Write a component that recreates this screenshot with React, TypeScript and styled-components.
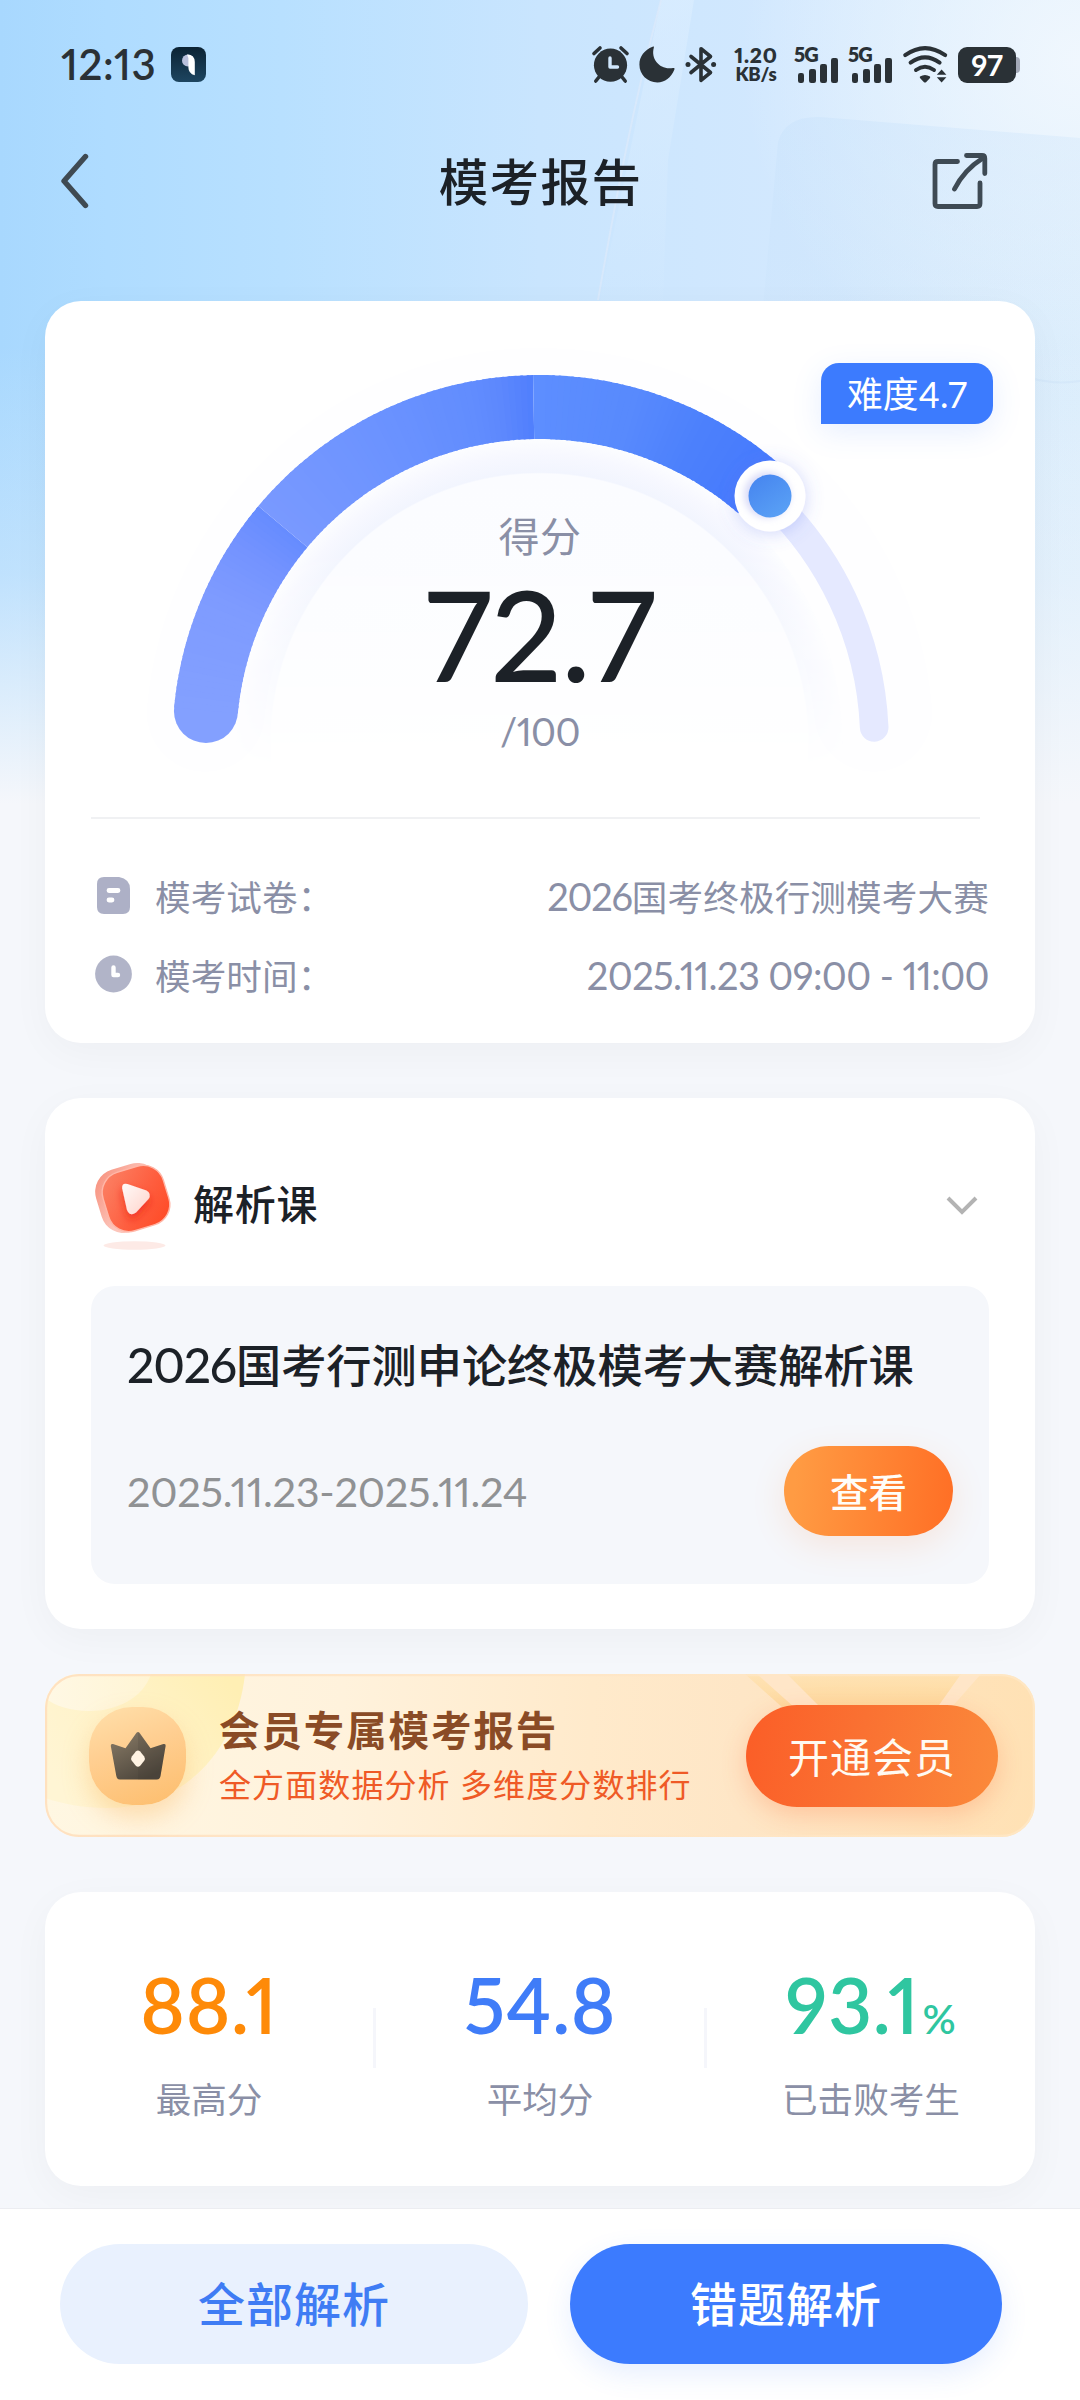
import React from "react";
import styled, { createGlobalStyle } from "styled-components";

const GlobalStyle = createGlobalStyle`
  * { box-sizing: border-box; }
  html, body { margin: 0; padding: 0; background: #f5f7fb; }
  body { font-family: Lato, "Noto Sans CJK SC", sans-serif; }
`;

const ink = "#1c2127";
const statusInk = "#2a3136";
const muted = "#8a8fa6";
const blue = "#3c7bfe";

const Page = styled.div`
  position: relative;
  isolation: isolate;
  display: flex;
  flex-direction: column;
  width: 1080px;
  height: 2400px;
  overflow: hidden;
  background: #f5f7fb;
  color: ${ink};
  white-space: nowrap;
  font-variant-numeric: proportional-nums lining-nums;
`;

const BackdropArt = styled.svg`
  position: absolute;
  inset: 0 0 auto 0;
  z-index: -1;
`;

const Digits = styled.span`
  font-size: 1.065em;
  line-height: 1;
  letter-spacing: -1.2px;
`;

/* ---------- status bar ---------- */

const StatusBar = styled.div`
  display: flex;
  align-items: center;
  justify-content: space-between;
  height: 129px;
  padding: 0 60px 0 61px;
  color: ${statusInk};
`;

const StatusLeft = styled.div`
  display: flex;
  align-items: center;
  gap: 15px;
`;

const Clock = styled.span`
  font-size: 42px;
  line-height: 48px;
  padding-bottom: 2px;
  font-weight: 600;
  letter-spacing: 0.5px;
`;

const StatusRight = styled.div`
  display: flex;
  align-items: center;
`;

const StatusGlyph = styled.svg<{ $gap: number }>`
  display: block;
  flex: none;
  margin-left: ${(p) => p.$gap}px;
  overflow: visible;
`;

const NetSpeed = styled.div`
  display: flex;
  flex-direction: column;
  align-items: center;
  width: 46px;
  margin-left: 16px;
  padding-bottom: 1px;
`;

const NetValue = styled.span`
  font-size: 21px;
  line-height: 21px;
  font-weight: 800;
  letter-spacing: 0.8px;
`;

const NetUnit = styled.span`
  font-size: 18.5px;
  line-height: 19px;
  font-weight: 800;
  letter-spacing: -0.2px;
`;

const SignalIcon = styled.div<{ $gap: number }>`
  position: relative;
  display: flex;
  align-items: flex-end;
  justify-content: flex-end;
  gap: 4.4px;
  width: 43px;
  height: 37px;
  margin-left: ${(p) => p.$gap}px;
`;

const SignalTag = styled.span`
  position: absolute;
  top: -3px;
  left: -1px;
  font-size: 20px;
  line-height: 22px;
  font-weight: 800;
  letter-spacing: -0.8px;
`;

const SignalBar = styled.i<{ $h: number }>`
  width: 6.8px;
  height: ${(p) => p.$h}px;
  border-radius: 2.2px;
  background: ${statusInk};
`;

const Battery = styled.div`
  display: flex;
  align-items: center;
  margin-left: 10px;
`;

const BatteryBody = styled.div`
  width: 58px;
  height: 36px;
  border-radius: 9px;
  background: ${statusInk};
  color: #fff;
  text-align: center;
  font-size: 29px;
  line-height: 35px;
  font-weight: 700;
`;

const BatteryCap = styled.div`
  width: 4px;
  height: 16px;
  border-radius: 0 4px 4px 0;
  background: #a3a9b8;
`;

/* ---------- navigation ---------- */

const NavBar = styled.header`
  display: grid;
  grid-template-columns: 1fr auto 1fr;
  align-items: center;
  height: 104px;
  padding: 0 92px 0 60px;
`;

const NavTitle = styled.h1`
  margin: 0;
  padding: 1px 0 0 33px;
  font-size: 49.5px;
  font-weight: 500;
  line-height: 60px;
  letter-spacing: 1.4px;
`;

const NavAction = styled.button<{ $end?: boolean }>`
  display: flex;
  justify-self: ${(p) => (p.$end ? "end" : "start")};
  padding: 0;
  border: 0;
  background: none;
`;

/* ---------- cards ---------- */

const Content = styled.main`
  display: flex;
  flex-direction: column;
  padding: 68px 45px 0;
`;

const Card = styled.section<{ $h: number; $top?: number }>`
  position: relative;
  height: ${(p) => p.$h}px;
  margin-top: ${(p) => p.$top ?? 0}px;
  border-radius: 36px;
  background: #fff;
  box-shadow: 0 10px 40px rgba(20, 24, 40, 0.035);
`;

const GaugeArea = styled.div`
  display: grid;
  height: 516px;
  > * { grid-area: 1 / 1; }
`;

const GaugeDrawing = styled.svg`
  display: block;
`;

const ScoreStack = styled.div`
  display: flex;
  flex-direction: column;
  align-items: center;
  padding-top: 206px;
`;

const ScoreLabel = styled.span`
  font-size: 41px;
  line-height: 60px;
  letter-spacing: 0.6px;
  color: ${muted};
`;

const ScoreValue = styled.span`
  margin-top: -3px;
  font-size: 125px;
  line-height: 140px;
  font-weight: 500;
  letter-spacing: -0.6px;
`;

const ScoreTotal = styled.span`
  margin-top: 2px;
  font-size: 38px;
  line-height: 50px;
  letter-spacing: -0.6px;
  color: ${muted};
`;

const DifficultyTag = styled.div`
  position: absolute;
  top: 62px;
  right: 42px;
  width: 172px;
  height: 61px;
  border-radius: 18px 18px 18px 0;
  background: ${blue};
  box-shadow: 0 8px 30px rgba(60, 123, 254, 0.13);
  color: #fff;
  font-size: 35.8px;
  line-height: 64px;
  text-align: center;
`;

const Divider = styled.hr`
  height: 2px;
  margin: 0 55px 37px 46px;
  border: 0;
  background: #f0f1f3;
`;

const InfoRow = styled.div`
  display: flex;
  align-items: center;
  height: 79px;
  padding: 0 46px 0 50px;
  color: ${muted};
  font-size: 35.6px;
`;

const InfoLabel = styled.span`
  margin-left: 20px;
  letter-spacing: 0.1px;
`;

const InfoValue = styled.span<{ $size?: number; $track?: number }>`
  margin-left: auto;
  font-size: ${(p) => p.$size ?? 35.6}px;
  letter-spacing: ${(p) => p.$track ?? 0}px;
`;

/* ---------- lesson card ---------- */

const LessonHeader = styled.div`
  display: flex;
  align-items: center;
  height: 188px;
  padding: 26px 56px 0 46px;
`;

const LessonHeading = styled.h2`
  flex: 1;
  margin: 0 0 0 20px;
  font-size: 41px;
  line-height: 60px;
  font-weight: 500;
  letter-spacing: 0.8px;
`;

const FoldIcon = styled.svg`
  margin-top: 2px;
`;

const LessonPanel = styled.div`
  display: flex;
  flex-direction: column;
  gap: 50px;
  height: 298px;
  margin: 0 46px;
  padding: 50px 36px 0 36px;
  border-radius: 24px;
  background: #f5f7fb;
`;

const LessonTitle = styled.h3`
  height: 60px;
  margin: 0;
  font-size: 45.2px;
  line-height: 60px;
  font-weight: 500;
`;

const LessonFoot = styled.div`
  display: flex;
  align-items: center;
  justify-content: space-between;
`;

const LessonDate = styled.span`
  font-size: 41.5px;
  color: #909294;
  letter-spacing: -0.25px;
`;

const ViewButton = styled.button`
  width: 169px;
  height: 90px;
  padding: 0 0 2px;
  border: 0;
  border-radius: 45px;
  background: linear-gradient(95deg, #ff9b43 8%, #ff7026 97%);
  box-shadow: 0 10px 34px rgba(255, 130, 50, 0.14);
  color: #fffdf8;
  font: inherit;
  font-size: 38.5px;
  font-weight: 500;
`;

/* ---------- membership banner ---------- */

const Banner = styled.section`
  position: relative;
  display: flex;
  align-items: center;
  height: 163px;
  margin-top: 45px;
  padding: 0 37px 0 44px;
  border-radius: 34px;
  overflow: hidden;
  background: linear-gradient(92deg, #fff7e2 0%, #fff2dc 30%, #ffeacb 55%, #fee6c6 70%, #ffe1b4 100%);
`;

const BannerArt = styled.svg`
  position: absolute;
  inset: 0;
`;

const CrownTile = styled.div`
  position: relative;
  display: grid;
  place-items: center;
  width: 97px;
  height: 98px;
  border-radius: 43px;
  background: linear-gradient(160deg, #ffe0ab 0%, #ffcf92 40%, #fdbd6c 100%);
  box-shadow: 0 12px 26px rgba(250, 180, 90, 0.38);
`;

const BannerCopy = styled.div`
  position: relative;
  display: flex;
  flex-direction: column;
  flex: 1;
  margin-left: 33px;
`;

const BannerTitle = styled.strong`
  font-size: 40.5px;
  line-height: 58px;
  font-weight: 700;
  letter-spacing: 1.9px;
  color: #8a4b26;
`;

const BannerSub = styled.span`
  font-size: 32px;
  line-height: 50px;
  letter-spacing: 1.1px;
  color: #ef5a26;
`;

const JoinButton = styled.button`
  position: relative;
  width: 252px;
  height: 102px;
  padding: 0 0 1px;
  border: 0;
  border-radius: 51px;
  background: linear-gradient(100deg, #fb5f28 4%, #fa7132 45%, #fb883a 96%);
  box-shadow: 0 8px 24px rgba(255, 110, 60, 0.27);
  color: #fffaf2;
  font: inherit;
  font-size: 41px;
  letter-spacing: 1px;
`;

/* ---------- statistics ---------- */

const StatsRow = styled.div`
  display: grid;
  grid-template-columns: 1fr 3px 1fr 3px 1fr;
  height: 100%;
`;

const Stat = styled.div`
  display: flex;
  flex-direction: column;
  align-items: center;
  gap: 35px;
  padding-top: 73px;
`;

const StatValue = styled.div<{ $color: string }>`
  height: 80px;
  font-size: 76px;
  line-height: 80px;
  font-weight: 600;
  letter-spacing: 0.7px;
  color: ${(p) => p.$color};
`;

const StatUnit = styled.span`
  margin-left: 3px;
  font-size: 41px;
  line-height: 40px;
`;

const StatLabel = styled.span`
  font-size: 35.6px;
  line-height: 40px;
  color: ${muted};
`;

const StatDivider = styled.div`
  height: 60px;
  margin-top: 116px;
  background: #f5f6fb;
`;

/* ---------- bottom bar ---------- */

const BottomBar = styled.footer`
  position: relative;
  display: flex;
  gap: 42px;
  height: 192px;
  margin-top: auto;
  padding: 35px 78px 0 60px;
  border-top: 1px solid #ecedf1;
  background: #fff;
`;

const PillButton = styled.button<{ $primary?: boolean }>`
  flex: none;
  width: ${(p) => (p.$primary ? 432 : 468)}px;
  height: 120px;
  padding: 0 0 5px;
  border: 0;
  border-radius: 60px;
  background: ${(p) => (p.$primary ? blue : "#e9f1fe")};
  box-shadow: ${(p) => (p.$primary ? "0 10px 28px rgba(60, 123, 254, 0.12)" : "none")};
  color: ${(p) => (p.$primary ? "#fff" : "#3f7cf4")};
  font: inherit;
  font-size: 47px;
  font-weight: 500;
  letter-spacing: 1px;
`;

/* ---------- drawings ---------- */

function Backdrop() {
  return (
    <BackdropArt width="1080" height="820" viewBox="0 0 1080 820">
      <defs>
        <linearGradient id="sky" x1="0" x2="1" y1="0" y2="0">
          <stop offset="0" stopColor="#a8d8fe" />
          <stop offset="0.1" stopColor="#afdcff" />
          <stop offset="0.26" stopColor="#b8e0ff" />
          <stop offset="0.5" stopColor="#c9e5fe" />
          <stop offset="0.72" stopColor="#d2e8fe" />
          <stop offset="1" stopColor="#dceefc" />
        </linearGradient>
        <linearGradient id="skyFade" x1="0" x2="0" y1="0" y2="1">
          <stop offset="0.42" stopColor="#f5f7fb" stopOpacity="0" />
          <stop offset="0.7" stopColor="#f5f7fb" stopOpacity="0.3" />
          <stop offset="0.98" stopColor="#f5f7fb" stopOpacity="1" />
        </linearGradient>
        <radialGradient id="cornerGlow" gradientUnits="userSpaceOnUse" cx="1080" cy="60" r="340">
          <stop offset="0" stopColor="#f2f8fe" stopOpacity="0.9" />
          <stop offset="1" stopColor="#f2f8fe" stopOpacity="0" />
        </radialGradient>
        <linearGradient id="beam" x1="0" x2="0" y1="0" y2="1">
          <stop offset="0" stopColor="#dceeff" stopOpacity="0.65" />
          <stop offset="1" stopColor="#dceeff" stopOpacity="0" />
        </linearGradient>
        <linearGradient id="sheet" x1="0" x2="0.3" y1="0" y2="1">
          <stop offset="0" stopColor="#c6e1fb" stopOpacity="0.42" />
          <stop offset="1" stopColor="#cfe5fa" stopOpacity="0.05" />
        </linearGradient>
      </defs>
      <rect width="1080" height="820" fill="url(#sky)" />
      <path d="M661 0H694L668 160L662 330H594Q628 160 661 0Z" fill="url(#beam)" />
      <path d="M661 0Q640 80 626 150T598 300" fill="none" stroke="#e3ecfa" strokeOpacity="0.5" strokeWidth="2" />
      <rect width="1080" height="420" fill="url(#cornerGlow)" />
      <path d="M820 117L1080 138V560H740L778 142Q785 116 820 117Z" fill="url(#sheet)" />
      <path d="M1030 378Q1056 385 1080 381" fill="none" stroke="#c3dcf4" strokeOpacity="0.3" strokeWidth="2" />
      <rect width="1080" height="820" fill="url(#skyFade)" />
    </BackdropArt>
  );
}

const GAUGE = { cx: 539.5, cy: 742, r: 335 };

const polar = (deg: number, r = GAUGE.r): [number, number] => {
  const a = (deg * Math.PI) / 180;
  return [GAUGE.cx + r * Math.cos(a), GAUGE.cy - r * Math.sin(a)];
};

const arc = (from: number, to: number, r = GAUGE.r) => {
  const [x1, y1] = polar(from, r);
  const [x2, y2] = polar(to, r);
  return `M${x1} ${y1}A${r} ${r} 0 0 1 ${x2} ${y2}`;
};

type Stop = [number, number[]];

const bands: Stop[][] = [
  [[174.6, [131, 160, 255]], [156, [126, 155, 255]], [147, [116, 147, 255]], [140, [102, 140, 255]]],
  [[140, [121, 153, 255]], [118, [108, 147, 255]], [102, [98, 141, 254]], [96, [92, 135, 253]], [91, [80, 127, 253]]],
  [[91, [93, 142, 255]], [75, [88, 138, 253]], [62, [76, 128, 252]], [49, [69, 121, 253]]],
];

const shade = (stops: Stop[], deg: number) => {
  let i = 0;
  while (i < stops.length - 2 && deg < stops[i + 1][0]) i++;
  const [a, ca] = stops[i];
  const [b, cb] = stops[i + 1];
  const t = Math.min(1, Math.max(0, (a - deg) / (a - b)));
  return `rgb(${ca.map((v, k) => Math.round(v + (cb[k] - v) * t)).join(",")})`;
};

function Gauge() {
  const slices: React.ReactElement[] = [];
  bands.forEach((stops, n) => {
    const end = stops[stops.length - 1][0];
    for (let d = stops[0][0]; d > end + 0.01; d -= 1) {
      const next = Math.max(end, d - 1.4);
      slices.push(<path key={`${n}-${d}`} d={arc(d, next)} stroke={shade(stops, d - 0.5)} strokeWidth="64" fill="none" />);
    }
  });
  const [sx, sy] = polar(174.7);
  const [kx, ky] = [770, 496];
  return (
    <GaugeDrawing width="990" height="516" viewBox="45 301 990 516">
      <defs>
        <radialGradient id="dial" gradientUnits="userSpaceOnUse" cx="539.5" cy="742" r="303">
          <stop offset="0" stopColor="#fcfdff" />
          <stop offset="0.885" stopColor="#fbfcff" />
          <stop offset="0.89" stopColor="#f2f5fe" />
          <stop offset="0.95" stopColor="#f7f8ff" />
          <stop offset="1" stopColor="#fcfdff" />
        </radialGradient>
        <linearGradient id="dialFade" gradientUnits="userSpaceOnUse" x1="0" x2="0" y1="430" y2="770">
          <stop offset="0" stopColor="#fff" />
          <stop offset="0.35" stopColor="#fff" />
          <stop offset="1" stopColor="#000" />
        </linearGradient>
        <mask id="dialMask" maskUnits="userSpaceOnUse" x="45" y="301" width="990" height="516">
          <rect x="45" y="301" width="990" height="516" fill="url(#dialFade)" />
        </mask>
        <linearGradient id="knob" x1="0" x2="0.7" y1="0" y2="1">
          <stop offset="0" stopColor="#4583ef" />
          <stop offset="1" stopColor="#59a0f5" />
        </linearGradient>
        <filter id="knobShadow" x="-60%" y="-60%" width="220%" height="220%">
          <feDropShadow dx="0" dy="2" stdDeviation="9" floodColor="#5f78f0" floodOpacity="0.3" />
        </filter>
        <filter id="knobInner" x="-50%" y="-50%" width="200%" height="200%">
          <feGaussianBlur stdDeviation="3.5" />
        </filter>
      </defs>
      <path d={arc(175, 5)} fill="none" stroke="#fefeff" strokeWidth="118" strokeLinecap="round" />
      <g mask="url(#dialMask)">
        <circle cx="539.5" cy="742" r="303" fill="url(#dial)" />
      </g>
      <path d={arc(48, 2.5)} fill="none" stroke="#e5e9ff" strokeWidth="28.6" strokeLinecap="round" />
      <circle cx={sx} cy={sy} r="32" fill="rgb(131,160,255)" />
      {slices}
      <circle cx={kx} cy={ky} r="35.5" fill="#fff" filter="url(#knobShadow)" />
      <circle cx={kx - 3} cy={ky - 1} r="23" fill="#b9bdf2" fillOpacity="0.55" filter="url(#knobInner)" />
      <circle cx={kx} cy={ky} r="21.5" fill="url(#knob)" />
    </GaugeDrawing>
  );
}

function AppBadge() {
  return (
    <svg width="35" height="35" viewBox="0 0 35 35">
      <defs>
        <linearGradient id="appBg" x1="0" x2="0" y1="0" y2="1">
          <stop offset="0" stopColor="#0c2334" />
          <stop offset="1" stopColor="#1d4560" />
        </linearGradient>
      </defs>
      <rect width="35" height="35" rx="8" fill="url(#appBg)" />
      <circle cx="17" cy="13.5" r="6" fill="#b9c0dc" />
      <path d="M16 7.6Q23.8 8 23.8 15V28.3Q17.4 26.5 17.4 20.5V11Z" fill="#fff" />
    </svg>
  );
}

function StatusIcons() {
  return (
    <>
      <StatusGlyph $gap={0} width="37" height="37" viewBox="0 0 37 37">
        <circle cx="18.5" cy="19.2" r="16.6" fill={statusInk} />
        <path d="M2 7.5L8 2M35 7.5L29 2M7 31L3.8 35M30 31L33.2 35" stroke={statusInk} strokeWidth="3.6" strokeLinecap="round" />
        <path d="M18 12V21H25.5" fill="none" stroke="#d0e7fd" strokeWidth="3.4" strokeLinecap="round" strokeLinejoin="round" />
      </StatusGlyph>
      <StatusGlyph $gap={10} width="36" height="37" viewBox="0 0 36 37">
        <path d="M13.6 0.8C14.6 0.2 15.2 0.6 14.8 1.8C11.5 13.5 21.5 24.5 34 22C35.4 21.8 35.8 22.4 35.4 23.4C32 31.5 26 36.4 18.4 36.4C8.2 36.4 0.4 28.6 0.4 18.6C0.4 10.6 5.5 4 13.6 0.8Z" fill={statusInk} />
      </StatusGlyph>
      <StatusGlyph $gap={10} width="32" height="37" viewBox="0 0 32 37">
        <path d="M6 10.5L25.5 26.5L16 34.3V2.7L25.5 10.5L6 26.5" fill="none" stroke={statusInk} strokeWidth="3.6" strokeLinecap="round" strokeLinejoin="round" />
        <circle cx="3" cy="18.5" r="2.5" fill={statusInk} />
        <circle cx="28.6" cy="18.5" r="2.5" fill={statusInk} />
      </StatusGlyph>
    </>
  );
}

function Signal({ gap }: { gap: number }) {
  return (
    <SignalIcon $gap={gap}>
      <SignalTag>5G</SignalTag>
      {[10, 14.5, 19, 25].map((h) => (
        <SignalBar key={h} $h={h} />
      ))}
    </SignalIcon>
  );
}

function Wifi() {
  return (
    <StatusGlyph $gap={11} width="45" height="37" viewBox="0 0 45 37">
      <g fill="none" stroke={statusInk} strokeWidth="4" strokeLinecap="round">
        <path d="M2.2 9.2Q22 -5 42.2 9.2" />
        <path d="M7.6 16.6Q22 6.2 36.6 16.6" />
        <path d="M13 24Q22 17.4 31 24" />
      </g>
      <path d="M17 30.6Q22 27.6 27 30.6Q27.6 31.4 26.8 32.2L23 36.2Q22 37 21 36.2L17.2 32.2Q16.4 31.4 17 30.6Z" fill={statusInk} />
      <path d="M38.6 23.4L43.4 28.8H33.8ZM38.6 36.6L43.4 31.2H33.8Z" fill={statusInk} />
    </StatusGlyph>
  );
}

function PlayTile() {
  return (
    <svg width="82" height="92" viewBox="92 1159 82 92">
      <defs>
        <linearGradient id="tile" x1="0" x2="1" y1="0" y2="1">
          <stop offset="0" stopColor="#fb8468" />
          <stop offset="0.55" stopColor="#fe5f40" />
          <stop offset="1" stopColor="#ff4722" />
        </linearGradient>
        <linearGradient id="tileBack" x1="0" x2="1" y1="0" y2="1">
          <stop offset="0" stopColor="#f78b76" />
          <stop offset="0.5" stopColor="#fcc5bb" />
          <stop offset="1" stopColor="#ffc9bc" />
        </linearGradient>
        <linearGradient id="play" x1="0" x2="1" y1="0" y2="1">
          <stop offset="0" stopColor="#fffaf8" />
          <stop offset="1" stopColor="#ffd3ca" />
        </linearGradient>
        <filter id="playShadow" x="-50%" y="-50%" width="200%" height="200%">
          <feDropShadow dx="0" dy="5" stdDeviation="4" floodColor="#e8240a" floodOpacity="0.6" />
        </filter>
      </defs>
      <ellipse cx="135.500" cy="1245.500" rx="31" ry="4.200" fill="#fdeae6" />
      <rect x="98.500" y="1165.500" width="66" height="65" rx="23" fill="url(#tileBack)" transform="rotate(-17 131.5 1198)" />
      <rect x="105.500" y="1168" width="63" height="61" rx="21" fill="url(#tile)" stroke="#ffb7a8" strokeWidth="1.4" transform="rotate(-17 137 1198.5)" />
      <path d="M128.500 1184Q122.500 1182.500 123.200 1188.500L128 1210Q131 1217 137 1212.500L149.500 1199Q153 1194 147.500 1190.500Z" fill="url(#play)" filter="url(#playShadow)" />
    </svg>
  );
}

function Crown() {
  return (
    <svg width="56" height="50" viewBox="0 0 56 50">
      <defs>
        <linearGradient id="crown" x1="0" x2="0.6" y1="0" y2="1">
          <stop offset="0" stopColor="#8b7d68" />
          <stop offset="1" stopColor="#4d463c" />
        </linearGradient>
      </defs>
      <path d="M26.500 1.800Q28 0 29.500 1.800L40.500 17.300L53.500 13Q56 12.500 55.600 15L50.500 45Q49.800 48.500 46.500 48.500H10Q7 48.500 6.300 45L0.800 15Q0.500 12.500 3 13L15.500 17.300Z" fill="url(#crown)" />
      <path d="M28 1V48.500H46.500Q49.800 48.500 50.500 45L55.600 15Q56 12.500 53.500 13L40.500 17.300Z" fill="#3a342d" fillOpacity="0.15" />
      <path d="M25.800 20.500Q28 18.500 30.200 20.500L34.200 25.500Q35.600 27.700 34.200 29.800L30.200 34.800Q28 36.800 25.800 34.800L21.800 29.800Q20.400 27.700 21.800 25.500Z" fill="#fff3e3" />
    </svg>
  );
}

function BannerBackdrop() {
  return (
    <BannerArt width="990" height="163" viewBox="0 0 990 163">
      <defs>
        <linearGradient id="moon" x1="0" x2="1" y1="0.7" y2="0.2">
          <stop offset="0" stopColor="#fff5d4" />
          <stop offset="0.6" stopColor="#fff2c4" />
          <stop offset="1" stopColor="#ffefb4" />
        </linearGradient>
        <linearGradient id="gloss" x1="0" x2="1" y1="0" y2="0">
          <stop offset="0" stopColor="#fff9ea" stopOpacity="0.8" />
          <stop offset="1" stopColor="#fff6dc" stopOpacity="0.7" />
        </linearGradient>
        <linearGradient id="ray" x1="0" x2="0" y1="0" y2="1">
          <stop offset="0" stopColor="#ffe2b0" />
          <stop offset="1" stopColor="#fdd592" />
        </linearGradient>
        <linearGradient id="rim" x1="0" x2="1" y1="0" y2="0">
          <stop offset="0" stopColor="#ffdcb8" stopOpacity="0.8" />
          <stop offset="0.4" stopColor="#ffe3c2" stopOpacity="0.7" />
          <stop offset="1" stopColor="#ffe9c9" stopOpacity="0.7" />
        </linearGradient>
      </defs>
      <path d="M0 0H200C192 75 140 134 62 134C38 134 18 130 0 124Z" fill="url(#moon)" />
      <path d="M0 0H106C98 24 72 37 44 37C26 37 10 32 0 24Z" fill="url(#gloss)" />
      <path d="M700 0H930L898 34H738Z" fill="url(#ray)" fillOpacity="0.75" />
      <path d="M712 0H742L776 34H750ZM936 0H916L892 34H906Z" fill="#ffe6c8" />
      <rect x="1" y="1" width="988" height="161" rx="33" fill="none" stroke="url(#rim)" strokeWidth="2.400" />
    </BannerArt>
  );
}

export default function App() {
  return (
    <Page>
      <GlobalStyle />
      <Backdrop />

      <StatusBar>
        <StatusLeft>
          <Clock>12:13</Clock>
          <AppBadge />
        </StatusLeft>
        <StatusRight>
          <StatusIcons />
          <NetSpeed>
            <NetValue>1.20</NetValue>
            <NetUnit>KB/s</NetUnit>
          </NetSpeed>
          <Signal gap={16} />
          <Signal gap={11} />
          <Wifi />
          <Battery>
            <BatteryBody>97</BatteryBody>
            <BatteryCap />
          </Battery>
        </StatusRight>
      </StatusBar>

      <NavBar>
        <NavAction aria-label="返回">
          <svg width="30" height="56" viewBox="0 0 30 56">
            <path d="M25.500 3.500L4 28L25.500 52.500" fill="none" stroke="#3f4a52" strokeWidth="5.400" strokeLinecap="round" strokeLinejoin="round" />
          </svg>
        </NavAction>
        <NavTitle>模考报告</NavTitle>
        <NavAction $end aria-label="分享">
          <svg width="56" height="58" viewBox="0 0 56 58">
            <g fill="none" stroke="#3e4a54" strokeWidth="4.800" strokeLinecap="round" strokeLinejoin="round">
              <path d="M25.500 9.500H6Q3 9.500 3 12.500V51.500Q3 54.500 6 54.500H45Q48 54.500 48 51.500V31" />
              <path d="M34.500 3.500H50Q52.800 3.500 52.800 6.500V21.500" />
              <path d="M22.500 37Q32 18 51 6" />
            </g>
          </svg>
        </NavAction>
      </NavBar>

      <Content>
        <Card $h={742}>
          <GaugeArea>
            <Gauge />
            <ScoreStack>
              <ScoreLabel>得分</ScoreLabel>
              <ScoreValue>72.7</ScoreValue>
              <ScoreTotal>/100</ScoreTotal>
            </ScoreStack>
          </GaugeArea>
          <DifficultyTag>难度4.7</DifficultyTag>
          <Divider />
          <InfoRow>
            <svg width="40" height="40" viewBox="95 876 40 40">
              <path d="M104 877H119Q130 879 130 889V907Q130 914 123 914H104Q97 914 97 907V884Q97 877 104 877Z" fill="#adb0c6" />
              <path d="M109 890.500H118M109 900H112" stroke="#fff" strokeWidth="4.800" strokeLinecap="round" />
            </svg>
            <InfoLabel>模考试卷：</InfoLabel>
            <InfoValue $track={0.15}>
              <Digits>2026</Digits>国考终极行测模考大赛
            </InfoValue>
          </InfoRow>
          <InfoRow>
            <svg width="40" height="40" viewBox="95 955 40 40">
              <circle cx="113.500" cy="974" r="18.400" fill="#b1b4c8" />
              <path d="M113.500 967.500V975H118" fill="none" stroke="#fff" strokeWidth="4.400" strokeLinecap="round" strokeLinejoin="round" />
            </svg>
            <InfoLabel>模考时间：</InfoLabel>
            <InfoValue $size={38} $track={-0.6}>2025.11.23 09:00 - 11:00</InfoValue>
          </InfoRow>
        </Card>

        <Card $h={531} $top={55}>
          <LessonHeader>
            <PlayTile />
            <LessonHeading>解析课</LessonHeading>
            <FoldIcon width="34" height="24" viewBox="0 0 34 24">
              <path d="M3 4L17 18L31 4" fill="none" stroke="#b3b3b3" strokeWidth="4" />
            </FoldIcon>
          </LessonHeader>
          <LessonPanel>
            <LessonTitle>
              <Digits>2026</Digits>国考行测申论终极模考大赛解析课
            </LessonTitle>
            <LessonFoot>
              <LessonDate>2025.11.23-2025.11.24</LessonDate>
              <ViewButton>查看</ViewButton>
            </LessonFoot>
          </LessonPanel>
        </Card>

        <Banner>
          <BannerBackdrop />
          <CrownTile>
            <Crown />
          </CrownTile>
          <BannerCopy>
            <BannerTitle>会员专属模考报告</BannerTitle>
            <BannerSub>全方面数据分析 多维度分数排行</BannerSub>
          </BannerCopy>
          <JoinButton>开通会员</JoinButton>
        </Banner>

        <Card $h={294} $top={55}>
          <StatsRow>
            <Stat>
              <StatValue $color="#fe8a08">88.1</StatValue>
              <StatLabel>最高分</StatLabel>
            </Stat>
            <StatDivider />
            <Stat>
              <StatValue $color="#3f7cf8">54.8</StatValue>
              <StatLabel>平均分</StatLabel>
            </Stat>
            <StatDivider />
            <Stat>
              <StatValue $color="#2fc6a0">
                93.1<StatUnit>%</StatUnit>
              </StatValue>
              <StatLabel>已击败考生</StatLabel>
            </Stat>
          </StatsRow>
        </Card>
      </Content>

      <BottomBar>
        <PillButton>全部解析</PillButton>
        <PillButton $primary>错题解析</PillButton>
      </BottomBar>
    </Page>
  );
}
